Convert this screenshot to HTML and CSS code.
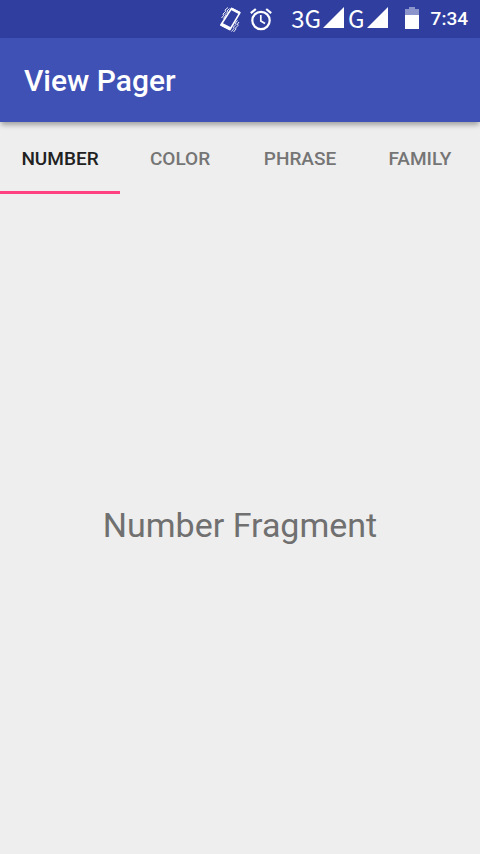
FILE: index.html
```html
<!DOCTYPE html>
<html lang="en">
<head>
<meta charset="utf-8">
<meta name="viewport" content="width=device-width, initial-scale=1">
<title>View Pager</title>
<link rel="stylesheet" href="styles.css">
</head>
<body>
<div class="status-bar">
  <svg class="vibrate" width="22" height="26" viewBox="0 0 22 26" aria-hidden="true">
    <path d="M12.500 2.500 20.800 6.800 11 23.500 2 18.800Z" fill="none" stroke="#fff" stroke-width="1.600" stroke-linejoin="round"/>
    <path d="M12.500 1.500 21.500 6 20.500 8.500 11.500 3.800ZM3 16.800 12.300 21.500 11 24.500 1 19.500Z" fill="#fff"/>
    <path d="M2.500 12 4.500 9.500 4 8 6.500 5.500 6 4 9 1.500M4.500 12.500 6.500 9.500 6 8.500 8.500 6 8 5 10.500 2.500M12.500 25.500 15 22.500 14.500 21 17 18.500 16.500 17 18.500 14.500M14.500 26 17 23 16.500 22 19 19.500 18.500 18 20 16" fill="none" stroke="#fff" stroke-width=".9"/>
  </svg>
  <svg class="alarm" width="22" height="23" viewBox="0 0 22 23" aria-hidden="true">
    <circle cx="11" cy="12.500" r="8.700" fill="none" stroke="#fff" stroke-width="2.200"/>
    <path d="M.8 5.200 5.800 1M21.200 5.200 16.200 1" fill="none" stroke="#fff" stroke-width="2.200"/>
    <path d="M10.800 7V13L15 15.500" fill="none" stroke="#fff" stroke-width="1.700"/>
  </svg>
  <span class="network">3G</span>
  <svg class="signal" width="21" height="22" viewBox="0 0 21 22" aria-hidden="true"><path d="M0 21 21 0V21Z" fill="#fff"/></svg>
  <span class="network">G</span>
  <svg class="signal" width="21" height="22" viewBox="0 0 21 22" aria-hidden="true"><path d="M0 21 21 0V21Z" fill="#fff"/></svg>
  <svg class="battery" width="14" height="22" viewBox="0 0 14 22" aria-hidden="true">
    <path d="M0 2H4V0H10V2H14V8H0Z" fill="#8c94cc"/>
    <path d="M0 8H14V22H0Z" fill="#fff"/>
  </svg>
  <time class="clock">7:34</time>
</div>
<header class="app-bar"><h1 class="title">View Pager</h1></header>
<nav class="tabs" role="tablist">
  <button class="tab selected" id="tab-number" role="tab" aria-selected="true" aria-controls="page">NUMBER</button>
  <button class="tab" role="tab" aria-selected="false">COLOR</button>
  <button class="tab" role="tab" aria-selected="false">PHRASE</button>
  <button class="tab" role="tab" aria-selected="false">FAMILY</button>
</nav>
<main class="page" id="page" role="tabpanel" aria-labelledby="tab-number">
  <p class="page-text">Number Fragment</p>
</main>
</body>
</html>
```
FILE: styles.css
```css
* { box-sizing: border-box; }

body {
  margin: 0;
  min-height: 100vh;
  display: flex;
  flex-direction: column;
  background: #eee;
  font-family: Roboto, "Liberation Sans", sans-serif;
}

.status-bar {
  display: flex;
  align-items: center;
  justify-content: flex-end;
  height: 38px;
  padding: 0 12px 2px 0;
  background: #303f9f;
  color: #fff;
}

.vibrate { margin: 2px 9px 0 0; }
.alarm { margin: 2px 19px 0 0; }

.network {
  font-family: "Noto Sans CJK SC", "Noto Sans", sans-serif;
  font-size: 24px;
  line-height: 24px;
}

.signal { margin-left: 2px; }
.signal + .network { margin-left: 4px; }
.battery { margin: 0 12px 0 17px; }

.clock {
  padding-top: 2px;
  font-size: 19px;
  font-weight: 500;
  line-height: 24px;
}

.app-bar {
  display: flex;
  align-items: center;
  height: 84px;
  padding: 0 24px;
  background: #3f51b5;
  color: #fff;
  box-shadow: 0 4px 5px -1px rgba(0, 0, 0, 0.32);
}

.title {
  margin: 0;
  font-size: 30px;
  font-weight: 500;
}

.tabs {
  display: grid;
  grid-template-columns: repeat(4, 1fr);
  height: 72px;
}

.tab {
  padding: 4px 0 0;
  border: 0;
  border-bottom: 3px solid transparent;
  background: none;
  color: #757575;
  font: 500 19px/24px Roboto, "Liberation Sans", sans-serif;
}

.tab.selected {
  border-bottom-color: #ff4081;
  color: #212121;
}

.page {
  flex: 1;
  display: flex;
  align-items: center;
  justify-content: center;
}

.page-text {
  margin: 0;
  padding-top: 2px;
  color: #707070;
  font-size: 34px;
}
```
